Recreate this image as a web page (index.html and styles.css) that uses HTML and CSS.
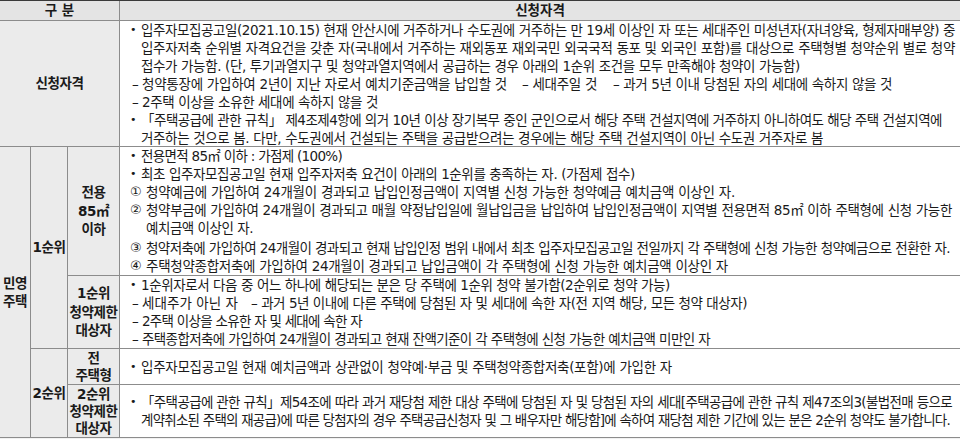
FILE: index.html
```html
<!DOCTYPE html>
<html lang="ko">
<head>
<meta charset="utf-8">
<title>신청자격</title>
<link rel="stylesheet" href="styles.css">
</head>
<body>
<div class="tbl">
  <div class="cell head span3">구 분</div>
  <div class="cell head">신청자격</div>

  <div class="cell side span3">신청자격</div>
  <div class="cell body">
    <div class="item"><span class="mk bullet">•</span><span class="tx">
      <span class="ln" data-end="955">입주자모집공고일(2021.10.15) 현재 안산시에 거주하거나 수도권에 거주하는 만 19세 이상인 자 또는 세대주인 미성년자(자녀양육, 형제자매부양) 중</span>
      <span class="ln" data-end="955">입주자저축 순위별 자격요건을 갖춘 자(국내에서 거주하는 재외동포 재외국민 외국국적 동포 및 외국인 포함)를 대상으로 주택형별 청약순위 별로 청약</span>
      <span class="ln" data-end="800">접수가 가능함. (단, 투기과열지구 및 청약과열지역에서 공급하는 경우 아래의 1순위 조건을 모두 만족해야 청약이 가능함)</span>
    </span></div>
    <div class="item"><span class="mk dash">–</span><span class="tx row">
      <span class="ln seg" data-end="507">청약통장에 가입하여 2년이 지난 자로서 예치기준금액을 납입할 것</span>
      <span class="ln seg" data-start="522" data-end="597">– 세대주일 것</span>
      <span class="ln seg" data-start="613" data-end="892">– 과거 5년 이내 당첨된 자의 세대에 속하지 않을 것</span>
    </span></div>
    <div class="item"><span class="mk dash">–</span><span class="tx">
      <span class="ln" data-end="378">2주택 이상을 소유한 세대에 속하지 않을 것</span>
    </span></div>
    <div class="item"><span class="mk bullet">•</span><span class="tx">
      <span class="ln" data-end="942">「주택공급에 관한 규칙」 제4조제4항에 의거 10년 이상 장기복무 중인 군인으로서 해당 주택 건설지역에 거주하지 아니하여도 해당 주택 건설지역에</span>
      <span class="ln" data-end="823">거주하는 것으로 봄. 다만, 수도권에서 건설되는 주택을 공급받으려는 경우에는 해당 주택 건설지역이 아닌 수도권 거주자로 봄</span>
    </span></div>
  </div>

  <div class="cell side c1 r-all"><span>민영<br>주택</span></div>
  <div class="cell side c2 r-first"><span>1순위</span></div>
  <div class="cell side c3 r2"><span>전용<br>85㎡<br>이하</span></div>
  <div class="cell body c4 r2">
    <div class="item"><span class="mk bullet">•</span><span class="tx"><span class="ln" data-end="342">전용면적 85㎡ 이하 : 가점제 (100%)</span></span></div>
    <div class="item"><span class="mk bullet">•</span><span class="tx"><span class="ln" data-end="635">최초 입주자모집공고일 현재 입주자저축 요건이 아래의 1순위를 충족하는 자. (가점제 접수)</span></span></div>
    <div class="item"><span class="mk num">①</span><span class="tx"><span class="ln" data-end="735">청약예금에 가입하여 24개월이 경과되고 납입인정금액이 지역별 신청 가능한 청약예금 예치금액 이상인 자.</span></span></div>
    <div class="item"><span class="mk num">②</span><span class="tx">
      <span class="ln" data-end="952">청약부금에 가입하여 24개월이 경과되고 매월 약정납입일에 월납입금을 납입하여 납입인정금액이 지역별 전용면적 85㎡ 이하 주택형에 신청 가능한</span>
      <span class="ln" data-end="253">예치금액 이상인 자.</span>
    </span></div>
    <div class="item gap"><span class="mk num">③</span><span class="tx"><span class="ln" data-end="950">청약저축에 가입하여 24개월이 경과되고 현재 납입인정 범위 내에서 최초 입주자모집공고일 전일까지 각 주택형에 신청 가능한 청약예금으로 전환한 자.</span></span></div>
    <div class="item"><span class="mk num">④</span><span class="tx"><span class="ln" data-end="728">주택청약종합저축에 가입하여 24개월이 경과되고 납입금액이 각 주택형에 신청 가능한 예치금액 이상인 자</span></span></div>
  </div>

  <div class="cell side c3 r3"><span>1순위<br>청약제한<br>대상자</span></div>
  <div class="cell body c4 r3">
    <div class="item"><span class="mk bullet">•</span><span class="tx"><span class="ln" data-end="670">1순위자로서 다음 중 어느 하나에 해당되는 분은 당 주택에 1순위 청약 불가함(2순위로 청약 가능)</span></span></div>
    <div class="item"><span class="mk dash">–</span><span class="tx row">
      <span class="ln seg" data-end="238">세대주가 아닌 자</span>
      <span class="ln seg" data-start="251" data-end="747">– 과거 5년 이내에 다른 주택에 당첨된 자 및 세대에 속한 자(전 지역 해당, 모든 청약 대상자)</span>
    </span></div>
    <div class="item"><span class="mk dash">–</span><span class="tx"><span class="ln" data-end="362">2주택 이상을 소유한 자 및 세대에 속한 자</span></span></div>
    <div class="item"><span class="mk dash">–</span><span class="tx"><span class="ln" data-end="710">주택종합저축에 가입하여 24개월이 경과되고 현재 잔액기준이 각 주택형에 신청 가능한 예치금액 미만인 자</span></span></div>
  </div>

  <div class="cell side c2 r-second"><span>2순위</span></div>
  <div class="cell side c3 r4 tight"><span>전<br>주택형</span></div>
  <div class="cell body c4 r4">
    <div class="item"><span class="mk bullet">•</span><span class="tx"><span class="ln" data-end="672">입주자모집공고일 현재 예치금액과 상관없이 청약예·부금 및 주택청약종합저축(포함)에 가입한 자</span></span></div>
  </div>

  <div class="cell side c3 r5 tight"><span>2순위<br>청약제한<br>대상자</span></div>
  <div class="cell body c4 r5">
    <div class="item"><span class="mk bullet">•</span><span class="tx">
      <span class="ln" data-end="952">「주택공급에 관한 규칙」제54조에 따라 과거 재당첨 제한 대상 주택에 당첨된 자 및 당첨된 자의 세대[주택공급에 관한 규칙 제47조의3(불법전매 등으로</span>
      <span class="ln" data-end="950">계약취소된 주택의 재공급)에 따른 당첨자의 경우 주택공급신청자 및 그 배우자만 해당함]에 속하여 재당첨 제한 기간에 있는 분은 2순위 청약도 불가합니다.</span>
    </span></div>
  </div>
</div>
<script src="fit.js"></script>
</body>
</html>
```

FILE: styles.css
```css
html, body {
  margin: 0;
  padding: 0;
}

body {
  background: #f1f1f1;
  font-family: "DejaVu Sans", "Noto Sans CJK KR", sans-serif;
  color: #1a1a1a;
}

.tbl {
  display: grid;
  grid-template-columns: 30px 36px 51px 1fr;
  grid-template-rows: 19px 125px 128px 72px 35px 52px;
  gap: 1px;
  background: #8c8c8c;
  border-top: 1px solid #3a3a3a;
  border-bottom: 1px solid #8c8c8c;
  width: 960px;
}

.cell {
  overflow: hidden;
  min-width: 0;
}

.head {
  background: #e4e4e4;
  font-weight: 700;
  font-size: 13.5px;
  line-height: 19px;
  text-align: center;
}

.span3 {
  grid-column: 1 / 4;
}

.side {
  background: #ebebeb;
  font-weight: 700;
  font-size: 13.5px;
  line-height: 18.5px;
  letter-spacing: -0.4px;
  display: flex;
  align-items: center;
  justify-content: center;
  text-align: center;
  white-space: nowrap;
}

.side.tight {
  line-height: 17px;
}

.body {
  background: #ffffff;
  font-size: 13.5px;
  line-height: 18px;
  white-space: nowrap;
  padding-left: 10px;
  display: flex;
  flex-direction: column;
  justify-content: center;
}

.c1 { grid-column: 1; }
.c2 { grid-column: 2; }
.c3 { grid-column: 3; }
.c4 { grid-column: 4; }

.r-all { grid-row: 3 / 7; }
.r-first { grid-row: 3 / 5; }
.r-second { grid-row: 5 / 7; }
.r2 { grid-row: 3; }
.r3 { grid-row: 4; }
.r4 { grid-row: 5; }
.r5 { grid-row: 6; }

.item {
  display: flex;
  align-items: flex-start;
}

.item.gap {
  margin-top: 2px;
}

.mk {
  flex: none;
}

.bullet {
  width: 11px;
  font-size: 11px;
}

.dash {
  width: 10px;
  padding-left: 2px;
}

.num {
  width: 16px;
  font-size: 13px;
}

.tx {
  display: flex;
  flex-direction: column;
  align-items: flex-start;
}

.tx.row {
  flex-direction: row;
}

.ln {
  display: block;
  width: max-content;
}
```

FILE: fit.js
```js
(function () {
  function fit() {
    var lines = document.querySelectorAll('.ln');
    lines.forEach(function (el) {
      el.style.letterSpacing = '';
      el.style.marginLeft = '';
    });
    lines.forEach(function (el) {
      var start = parseFloat(el.getAttribute('data-start'));
      if (!isNaN(start)) {
        var r0 = el.getBoundingClientRect();
        el.style.marginLeft = Math.max(0, start - r0.left) + 'px';
      }
      var end = parseFloat(el.getAttribute('data-end'));
      if (isNaN(end)) return;
      var r = el.getBoundingClientRect();
      var n = Array.from(el.textContent.trim()).length;
      if (!n) return;
      var ls = (end - r.right) / n;
      ls = Math.max(-1.6, Math.min(1.2, ls));
      el.style.letterSpacing = ls.toFixed(3) + 'px';
    });
  }
  fit();
  if (document.fonts && document.fonts.ready) {
    document.fonts.ready.then(fit);
  }
  window.addEventListener('load', fit);
})();
```
